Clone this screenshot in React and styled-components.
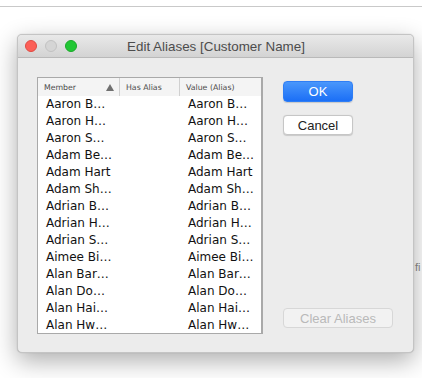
import styled, { createGlobalStyle } from "styled-components";

const rows = [
  "Aaron B…",
  "Aaron H…",
  "Aaron S…",
  "Adam Be…",
  "Adam Hart",
  "Adam Sh…",
  "Adrian B…",
  "Adrian H…",
  "Adrian S…",
  "Aimee Bi…",
  "Alan Bar…",
  "Alan Do…",
  "Alan Hai…",
  "Alan Hw…",
];

export default function App() {
  return (
    <>
      <Global />
      <Page>
        <TopRule />
        <BehindText>fi</BehindText>
        <Window>
          <TitleBar>
            <Lights>
              <Light color="#fc5f57" edge="#df4a42" />
              <Light color="#d5d5d5" edge="#c2c2c2" />
              <Light color="#22c735" edge="#1aa92a" />
            </Lights>
            <Title>Edit Aliases [Customer Name]</Title>
          </TitleBar>
          <Body>
            <Table>
              <HeaderRow>
                <HeadCell>
                  Member
                  <SortArrow />
                </HeadCell>
                <HeadCell>Has Alias</HeadCell>
                <HeadCell $last>Value (Alias)</HeadCell>
              </HeaderRow>
              {rows.map((name) => (
                <Row key={name}>
                  <Cell>{name}</Cell>
                  <Cell />
                  <Cell>{name}</Cell>
                </Row>
              ))}
            </Table>
            <Buttons>
              <Button $primary>OK</Button>
              <Button>Cancel</Button>
              <Spacer />
              <Button $disabled $wide>
                Clear Aliases
              </Button>
            </Buttons>
          </Body>
        </Window>
      </Page>
    </>
  );
}

const Global = createGlobalStyle`
  body {
    margin: 0;
    background: #ffffff;
    font-family: "DejaVu Sans", sans-serif;
  }
`;

const Page = styled.div`
  position: relative;
  width: 422px;
  height: 378px;
  overflow: hidden;
  background: #ffffff;
`;

const TopRule = styled.div`
  margin-top: 6px;
  height: 1px;
  background: #c9c9c9;
`;

const BehindText = styled.span`
  position: absolute;
  left: 415px;
  top: 261px;
  font-family: "Liberation Sans", sans-serif;
  font-size: 11px;
  color: #8a8a8a;
`;

const Window = styled.div`
  position: relative;
  margin: 27px 0 0 17px;
  width: 397px;
  height: 319px;
  box-sizing: border-box;
  border: 1px solid #c4c4c4;
  border-radius: 5px;
  background: #ececec;
  box-shadow: 0 8px 24px rgba(0, 0, 0, 0.32), 0 0 1px rgba(0, 0, 0, 0.25);
  display: flex;
  flex-direction: column;
  overflow: hidden;
`;

const TitleBar = styled.div`
  position: relative;
  height: 22px;
  flex: none;
  display: flex;
  align-items: center;
  justify-content: center;
  background: linear-gradient(#e9e9e9, #d3d3d3);
  border-bottom: 1px solid #b9b9b9;
`;

const Lights = styled.div`
  position: absolute;
  left: 7px;
  top: 5px;
  display: flex;
  gap: 8px;
`;

const Light = styled.span`
  width: 12px;
  height: 12px;
  box-sizing: border-box;
  border-radius: 50%;
  background: ${(p) => p.color};
  border: 0.5px solid ${(p) => p.edge};
`;

const Title = styled.div`
  font-family: "Liberation Sans", sans-serif;
  font-size: 13.4px;
  color: #4c4c4c;
  padding-left: 1px;
`;

const Body = styled.div`
  flex: 1;
  display: flex;
  padding: 19px 20px 19px 19px;
  gap: 20px;
`;

const Table = styled.div`
  width: 226px;
  box-sizing: border-box;
  border: 1px solid #a9a9a9;
  border-right-width: 2px;
  background: #ffffff;
  display: grid;
  grid-template-columns: 82px 60px 1fr;
  grid-auto-rows: 17px;
  align-content: start;
`;

const HeaderRow = styled.div`
  display: contents;
`;

const HeadCell = styled.div`
  height: 18px;
  display: flex;
  align-items: center;
  justify-content: space-between;
  padding: 0 6px;
  background: #f4f4f4;
  border-right: ${(p) => (p.$last ? "none" : "1px solid #d0d0d0")};
  font-size: 7.8px;
  color: #4a4a4a;
  margin-bottom: 1px;
`;

const SortArrow = styled.span`
  width: 0;
  height: 0;
  border-left: 4px solid transparent;
  border-right: 4px solid transparent;
  border-bottom: 7px solid #707070;
  margin-right: -1px;
`;

const Row = styled.div`
  display: contents;
`;

const Cell = styled.div`
  display: flex;
  align-items: center;
  padding-left: 8px;
  font-size: 12px;
  color: #111111;
  white-space: nowrap;
  overflow: hidden;
`;

const Buttons = styled.div`
  display: flex;
  flex-direction: column;
  gap: 13px;
  padding-top: 4px;
`;

const Spacer = styled.div`
  flex: 1;
`;

const Button = styled.button`
  width: ${(p) => (p.$wide ? "110px" : "70px")};
  height: ${(p) => (p.$primary ? "21px" : "20px")};
  box-sizing: border-box;
  border-radius: 4px;
  font-family: "Liberation Sans", sans-serif;
  font-size: 13px;
  padding: 0;
  margin-bottom: ${(p) => (p.$wide ? "6px" : "0")};
  color: ${(p) => (p.$primary ? "#ffffff" : p.$disabled ? "#b9b9b9" : "#222222")};
  background: ${(p) =>
    p.$primary
      ? "linear-gradient(#4a97fb, #1b6ff6)"
      : p.$disabled
      ? "#f2f2f2"
      : "#ffffff"};
  border: 1px solid
    ${(p) => (p.$primary ? "#2f7ef5" : p.$disabled ? "#d7d7d7" : "#c6c6c6")};
  box-shadow: ${(p) => (p.$disabled ? "none" : "0 0.5px 1px rgba(0,0,0,0.15)")};
`;
